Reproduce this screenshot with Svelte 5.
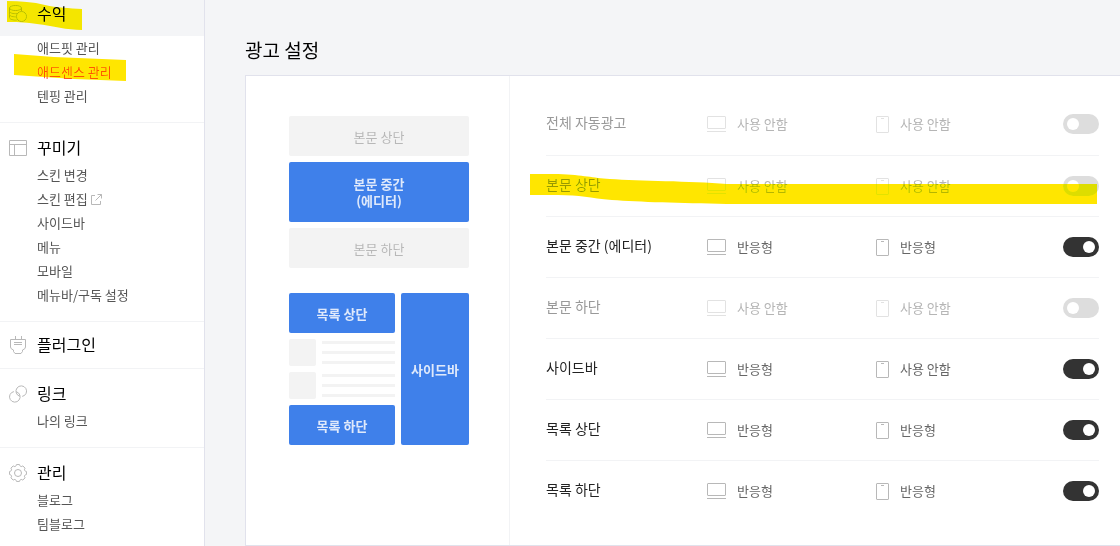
<script>
  let menu = [
    { title: '수익', icon: 'coins', active: true, marked: true, items: [{ text: '애드핏 관리' }, { text: '애드센스 관리', current: true }, { text: '텐핑 관리' }] },
    { title: '꾸미기', icon: 'layout', items: [{ text: '스킨 변경' }, { text: '스킨 편집', external: true }, { text: '사이드바' }, { text: '메뉴' }, { text: '모바일' }, { text: '메뉴바/구독 설정' }] },
    { title: '플러그인', icon: 'plug', items: [] },
    { title: '링크', icon: 'link', items: [{ text: '나의 링크' }] },
    { title: '관리', icon: 'gear', items: [{ text: '블로그' }, { text: '팀블로그' }] }
  ];

  let rows = $state([
    { name: '전체 자동광고', pc: '사용 안함', mobile: '사용 안함', on: false },
    { name: '본문 상단', pc: '사용 안함', mobile: '사용 안함', on: false, marked: true },
    { name: '본문 중간 (에디터)', pc: '반응형', mobile: '반응형', on: true },
    { name: '본문 하단', pc: '사용 안함', mobile: '사용 안함', on: false },
    { name: '사이드바', pc: '반응형', mobile: '사용 안함', on: true },
    { name: '목록 상단', pc: '반응형', mobile: '반응형', on: true },
    { name: '목록 하단', pc: '반응형', mobile: '반응형', on: true }
  ]);
</script>

<div class="page">
  <nav class="sidebar">
    {#each menu as group}
      <section class="group" class:active={group.active} class:single={group.items.length === 0}>
        <a class="title" href="#top">
          <svg class="icon" viewBox="0 0 18 18" width="18" height="18" aria-hidden="true">
            {#if group.icon === 'coins'}
              <ellipse cx="6.5" cy="3" rx="6" ry="2.5" />
              <path d="M.5 3v3.2c0 1.4 2.6 2.5 6 2.5h1.5M12.5 3v3M.5 6.2v3.2c0 1.4 2.6 2.5 6 2.5h.5M.5 9.4v3.2c0 1.4 2.6 2.5 6 2.5h1.3" />
              <circle cx="12.5" cy="11.5" r="5" />
            {:else if group.icon === 'layout'}
              <path d="M.5 1.5h17v15H.5zM.5 5.5h17M5.5 5.5v11" />
            {:else if group.icon === 'plug'}
              <path d="M1.500 3.500h15v7.500q0 2-3 3v1.500l-1.500 2h-6l-1.500-2V14q-3-1-3-3zM6.500 0v3.500M12.500 0v3.500M5 6.500h8M5 8.500h8" />
            {:else if group.icon === 'link'}
              <path d="M13.2 11.4A5.3 5.3 0 1 0 10.9 11.3M4.9 6.6A5.3 5.3 0 1 0 7.2 6.7" />
            {:else}
              <circle cx="9" cy="9" r="3.5" />
              <path d="M17.34 7.38A8.5 8.5 0 0 1 17.34 10.62A1.8 1.8 0 0 0 16.05 13.75A8.5 8.5 0 0 1 13.75 16.05A1.8 1.8 0 0 0 10.62 17.34A8.5 8.5 0 0 1 7.38 17.34A1.8 1.8 0 0 0 4.25 16.05A8.5 8.5 0 0 1 1.95 13.75A1.8 1.8 0 0 0 .66 10.62A8.5 8.5 0 0 1 .66 7.38A1.8 1.8 0 0 0 1.95 4.25A8.5 8.5 0 0 1 4.25 1.95A1.8 1.8 0 0 0 7.38 .66A8.5 8.5 0 0 1 10.62 .66A1.8 1.8 0 0 0 13.75 1.95A8.5 8.5 0 0 1 16.05 4.25A1.8 1.8 0 0 0 17.34 7.38z" />
            {/if}
          </svg>
          <span>{group.title}</span>
        </a>
        {#if group.marked}
          <svg class="mark mark-title" width="76" height="30" viewBox="0 0 76 30" aria-hidden="true">
            <path d="M0 1C14 1 26 2 38 5S62 8 75 9V30C60 30 46 26 30 24S10 22 0 22z" />
          </svg>
        {/if}
        {#if group.items.length}
          <ul>
            {#each group.items as item}
              <li>
                <a href="#top" class:current={item.current}>{item.text}</a>
                {#if item.external}
                  <svg class="icon" viewBox="0 0 11 11" width="11" height="11" aria-hidden="true">
                    <path d="M4 1.5H.5v9h9V7M6.5.5h4v4M10.5.5l-6 6" />
                  </svg>
                {/if}
                {#if item.current}
                  <svg class="mark mark-item" width="113" height="28" viewBox="0 0 113 28" aria-hidden="true">
                    <path d="M0 0L40 3L112 6V27L60 25L0 21z" />
                  </svg>
                {/if}
              </li>
            {/each}
          </ul>
        {/if}
      </section>
    {/each}
  </nav>

  <main>
    <h1>광고 설정</h1>
    <div class="panel">
      <div class="preview">
        <div class="slot">본문 상단</div>
        <div class="slot tall on">본문 중간<br />(에디터)</div>
        <div class="slot">본문 하단</div>
        <div class="listing">
          <div class="list">
            <div class="slot on">목록 상단</div>
            {#each [1, 2] as n (n)}
              <div class="entry">
                <div class="thumb"></div>
                <div class="lines"><i></i><i></i><i></i></div>
              </div>
            {/each}
            <div class="slot on">목록 하단</div>
          </div>
          <div class="slot side on">사이드바</div>
        </div>
      </div>

      <ul class="rows">
        {#each rows as row, i}
          <li class:off={!row.on}>
            <label for="ad-{i}">{row.name}</label>
            <div class="value">
              <svg class="icon" viewBox="0 0 19 16" width="19" height="16" aria-hidden="true">
                <rect x=".5" y=".5" width="18" height="12" rx=".5" /><path d="M0 15.5h19" />
              </svg>
              <span>{row.pc}</span>
            </div>
            <div class="value">
              <svg class="icon" viewBox="0 0 13 17" width="13" height="17" aria-hidden="true">
                <rect x=".5" y=".5" width="12" height="16" rx=".5" /><path d="M5 2.5h3" />
              </svg>
              <span>{row.mobile}</span>
            </div>
            <input id="ad-{i}" type="checkbox" role="switch" bind:checked={row.on} />
            {#if row.marked}
              <svg class="mark mark-row" viewBox="0 0 568 32" preserveAspectRatio="none" aria-hidden="true">
                <path d="M0 0H28C55 1 62 4 80 5C110 7 160 7 197 10H568V30H197C150 29 110 28 82 26C60 24 50 21 28 21H0z" />
              </svg>
            {/if}
          </li>
        {/each}
      </ul>
    </div>
  </main>
</div>

<style>
  :global(body) {
    background: #f4f5f7;
    font-family: 'Noto Sans CJK KR', 'Noto Sans', sans-serif;
  }
  :global(html) {
    overflow: hidden;
  }
  .page {
    display: flex;
    min-height: 100vh;
    color: #000;
  }
  ul {
    margin: 0;
    padding: 0;
    list-style: none;
  }
  a {
    color: inherit;
    text-decoration: none;
  }
  .icon {
    flex: none;
    fill: none;
    stroke: #b8b8b8;
  }
  .sidebar {
    flex: none;
    width: 204px;
    background: #fff;
    border-right: 1px solid #e1e2ec;
  }
  .group {
    position: relative;
    padding-bottom: 14px;
    border-bottom: 1px solid #f2f3f5;
  }
  .group:last-child {
    border-bottom: 0;
  }
  .title {
    display: flex;
    align-items: center;
    gap: 10px;
    height: 30px;
    padding: 10px 9px 0;
    font-size: 16px;
    line-height: 24px;
  }
  .title span {
    padding-bottom: 2px;
  }
  .active .title {
    height: 28px;
    padding: 0 9px 8px;
    background: #f4f5f7;
  }
  .single {
    padding-bottom: 8px;
  }
  .single .title {
    padding-top: 8px;
  }
  .group li {
    position: relative;
    display: flex;
    align-items: center;
    gap: 3px;
    padding-left: 37px;
    color: #555;
    font-size: 13px;
    line-height: 24px;
  }
  .group li .current {
    color: #ff5544;
  }
  .mark {
    position: absolute;
    fill: #ffe600;
    mix-blend-mode: darken;
    pointer-events: none;
  }
  .mark-title {
    left: 7px;
    top: 0;
  }
  .mark-item {
    left: 14px;
    top: -6px;
  }
  main {
    flex: 1;
    min-width: 0;
    padding-left: 40px;
  }
  h1 {
    margin: 0;
    padding: 35px 0 10px;
    font-size: 19px;
    font-weight: 400;
    line-height: 30px;
  }
  .panel {
    display: flex;
    background: #fff;
    border: 1px solid #e1e2ec;
    border-right: 0;
  }
  .preview {
    display: flex;
    flex: none;
    flex-direction: column;
    gap: 6px;
    box-sizing: border-box;
    width: 264px;
    padding: 40px 40px 40px 43px;
    border-right: 1px solid #f2f3f5;
  }
  .slot {
    display: flex;
    align-items: center;
    justify-content: center;
    height: 40px;
    border-radius: 2px;
    background: #f3f3f3;
    color: #b8b8b8;
    font-size: 13px;
    line-height: 17px;
    text-align: center;
  }
  .slot.on {
    background: #3f80ea;
    color: #dfe9fb;
    font-weight: 700;
  }
  .slot.tall {
    height: 60px;
  }
  .listing {
    display: flex;
    gap: 6px;
    margin-top: 19px;
  }
  .list {
    display: flex;
    flex: 1;
    flex-direction: column;
    gap: 6px;
  }
  .slot.side {
    width: 68px;
    height: auto;
  }
  .entry {
    display: flex;
    gap: 6px;
  }
  .thumb {
    width: 27px;
    height: 27px;
    border-radius: 2px;
    background: #f3f3f3;
  }
  .lines {
    display: flex;
    flex: 1;
    flex-direction: column;
    gap: 7px;
    padding-top: 2px;
  }
  .lines i {
    height: 3px;
    background: #f3f3f3;
  }
  .rows {
    flex: 1;
    padding: 18px 21px 24px 36px;
  }
  .rows li {
    position: relative;
    display: grid;
    grid-template-columns: 161px 169px 1fr 36px;
    align-items: center;
    height: 60px;
    border-top: 1px solid #f2f3f5;
  }
  .rows li:first-child {
    border-top-color: transparent;
    margin-top: -1px;
    padding-bottom: 1px;
  }
  label {
    padding-bottom: 4px;
    color: #222;
    font-size: 14px;
    line-height: 20px;
  }
  .value {
    display: flex;
    align-items: center;
    gap: 11px;
    color: #666;
    font-size: 13px;
    line-height: 20px;
  }
  .off label {
    color: #999;
  }
  .off .value {
    color: #b5b5b5;
  }
  .off .value .icon {
    stroke: #e2e2e2;
  }
  input {
    appearance: none;
    width: 36px;
    height: 20px;
    margin: 0;
    border-radius: 10px;
    background: #ddd;
  }
  input::before {
    content: '';
    display: block;
    width: 12px;
    height: 12px;
    margin: 4px;
    border-radius: 50%;
    background: #fff;
  }
  input:checked {
    background: #333;
  }
  input:checked::before {
    margin-left: 20px;
  }
  .mark-row {
    left: -16px;
    top: 18px;
    width: calc(100% + 14px);
    height: 32px;
  }
</style>
